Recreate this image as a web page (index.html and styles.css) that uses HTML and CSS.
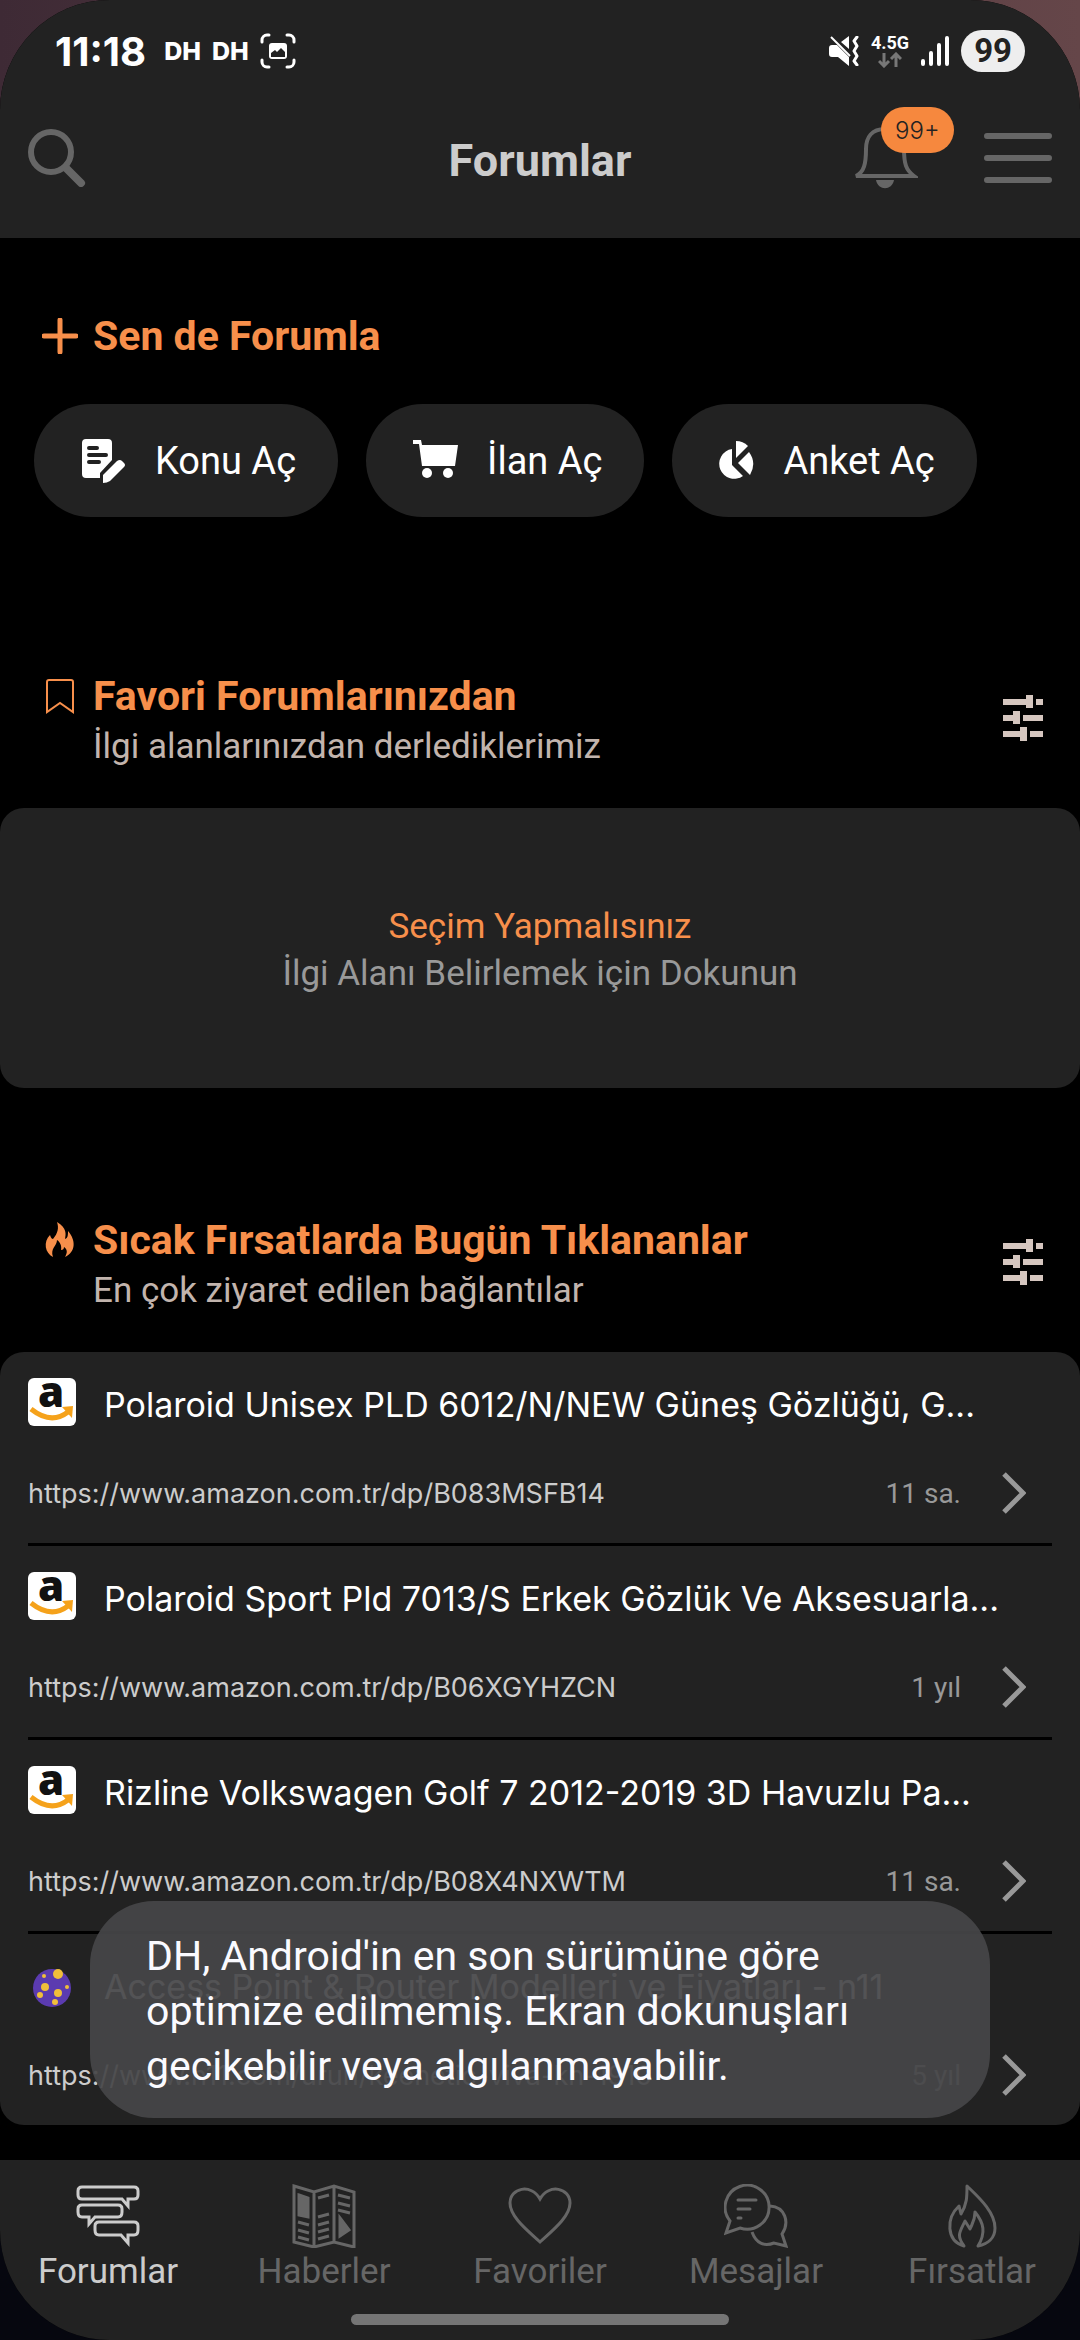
FILE: index.html
```html
<!DOCTYPE html>
<html lang="tr">
<head>
  <meta charset="UTF-8">
  <meta name="viewport" content="width=device-width, initial-scale=1.0">
  <title>Forumlar</title>
  <link rel="stylesheet" href="styles.css">
</head>
<body>

<div class="screen">

  <header class="header">
    <!-- Status bar -->
    <div class="status-bar">
      <div class="status-left">
        <span class="clock">11:18</span>
        <span class="notif">DH</span>
        <span class="notif">DH</span>
        <svg class="shot-icon" viewBox="0 0 36 36">
          <path d="M2 9V7a5 5 0 0 1 5-5h2M27 2h2a5 5 0 0 1 5 5v2M34 27v2a5 5 0 0 1-5 5h-2M9 34H7a5 5 0 0 1-5-5v-2" fill="none" stroke="#fff" stroke-width="3" stroke-linecap="round"/>
          <rect x="9" y="10" width="18" height="16" rx="3" fill="#fff"/>
          <path d="M11 24v-4l4-3 2 2 4-4 4 4v5z" fill="#222"/>
        </svg>
      </div>
      <div class="status-right">
        <svg class="mute-icon" viewBox="0 0 30 30">
          <path d="M0 12q0-3 3-3h5l12 12v9L9 21H3q-3 0-3-3zM12 6l8-6v13z" fill="#fff"/>
          <path d="M2 1l19 19" stroke="#fff" stroke-width="2"/>
          <path d="M28 1l-3 4 3 5-3 5 3 5-3 5 3 4" fill="none" stroke="#fff" stroke-width="3" stroke-linecap="round" stroke-linejoin="round"/>
        </svg>
        <div class="network">
          <span>4.5G</span>
          <svg viewBox="0 0 24 16">
            <path d="M6 1v13M1 9l5 5 5-5M18 15V2M13 7l5-5 5 5" fill="none" stroke="#777" stroke-width="3"/>
          </svg>
        </div>
        <svg class="signal-icon" viewBox="0 0 28 30">
          <path d="M2 25v3M10 17v11M18 9v19M26 2v26" stroke="#fff" stroke-width="4" stroke-linecap="round"/>
        </svg>
        <span class="battery">99</span>
      </div>
    </div>

    <div class="toolbar">
      <button class="icon-button" aria-label="Ara">
        <svg class="search-icon" viewBox="0 0 58 58">
          <circle cx="23" cy="23" r="20" fill="none" stroke="#666" stroke-width="6"/>
          <path d="M38 39l15 15" stroke="#666" stroke-width="8" stroke-linecap="round"/>
        </svg>
      </button>
      <h1>Forumlar</h1>
      <div class="toolbar-right">
        <button class="icon-button bell" aria-label="Bildirimler">
          <svg class="bell-icon" viewBox="0 0 66 62">
            <path d="M33 2C20 2 14 10 14 22c0 15-2 23-10 27h58c-8-6-10-12-10-27C52 10 46 2 33 2z" fill="none" stroke="#666" stroke-width="4"/>
            <path d="M24 53h18c-2 11-16 11-18 0z" fill="#666"/>
          </svg>
          <span class="badge">99+</span>
        </button>
        <button class="icon-button" aria-label="Menü">
          <svg class="menu-icon" viewBox="0 0 68 50">
            <path d="M3 3h62M3 25h62M3 47h62" stroke="#666" stroke-width="6" stroke-linecap="round"/>
          </svg>
        </button>
      </div>
    </div>
  </header>

  <main class="content">
    <section>
      <div class="section-head">
        <svg class="head-icon" viewBox="0 0 36 36">
          <path d="M18 2v32M2 18h32" stroke="#f78f4b" stroke-width="5" stroke-linecap="round"/>
        </svg>
        <h2>Sen de Forumla</h2>
      </div>
      <div class="chips">
        <button class="chip">
          <svg class="chip-icon" viewBox="0 0 46 46">
            <path d="M6 1h22q4 0 4 4v17L20 35v5H6q-4 0-4-4V5q0-4 4-4z" fill="#fff"/>
            <path d="M9 10h8M9 17h17M9 24h10" stroke="#222" stroke-width="4" stroke-linecap="round"/>
            <path d="M23 45v-8l14-14q3-2 5 0l2 2q2 2 0 4L30 43q-3 2-7 2z" fill="#fff"/>
          </svg>
          Konu Aç
        </button>
        <button class="chip">
          <svg class="chip-icon" viewBox="0 0 46 46">
            <path d="M1 2h8l1 5h36l-3 21H10L7 6H1z" fill="#fff"/>
            <circle cx="15" cy="35" r="5" fill="#fff"/>
            <circle cx="36" cy="35" r="5" fill="#fff"/>
          </svg>
          İlan Aç
        </button>
        <button class="chip">
          <svg class="chip-icon poll-icon" viewBox="3 0 36 46">
            <path d="M17 11v16l11 11A15 15 0 1 1 17 11z" fill="#fff"/>
            <path d="M21 3q7 0 12 5L21 20z" fill="#fff"/>
            <path d="M23 25l11-11q8 11 1 23z" fill="#fff"/>
          </svg>
          Anket Aç
        </button>
      </div>
    </section>

    <section class="favorites">
      <div class="section-head">
        <svg class="head-icon" viewBox="0 0 36 36">
          <path d="M5 34V4q0-2 2-2h22q2 0 2 2v30L18 25z" fill="none" stroke="#f78f4b" stroke-width="2"/>
        </svg>
        <div class="head-text">
          <h2>Favori Forumlarınızdan</h2>
          <p>İlgi alanlarınızdan derlediklerimiz</p>
        </div>
        <button class="icon-button tune" aria-label="Favori ayarları">
          <svg class="tune-icon" viewBox="0 0 40 46">
            <path d="M0 4h23V0h7v13h-7v-3H0zM33 4h7v6h-7zM0 20h10v-4h7v13h-7v-3H0zM20 20h20v6H20zM0 36h17v-4h7v14h-7v-4H0zM27 36h13v6H27z" fill="#d5c6bf"/>
          </svg>
        </button>
      </div>
      <a class="card empty-card" href="#">
        <span class="empty-title">Seçim Yapmalısınız</span>
        <span>İlgi Alanı Belirlemek için Dokunun</span>
      </a>
    </section>

    <section class="deals">
      <div class="section-head">
        <svg class="head-icon" viewBox="0 0 36 36">
          <path d="M15 0c10 6 9 12 8 17 3-1 3-4 3-8 8 9 8 21-3 26 3-5 2-8-1-10 0 2-1 3-3 3 1-4-1-8-4-10 0 6-7 8-4 17C3 31 1 20 8 13c1 3 2 4 3 4 5-6 6-11 4-17z" fill="#f78f4b"/>
        </svg>
        <div class="head-text">
          <h2>Sıcak Fırsatlarda Bugün Tıklananlar</h2>
          <p>En çok ziyaret edilen bağlantılar</p>
        </div>
        <button class="icon-button tune" aria-label="Fırsat ayarları">
          <svg class="tune-icon" viewBox="0 0 40 46">
            <path d="M0 4h23V0h7v13h-7v-3H0zM33 4h7v6h-7zM0 20h10v-4h7v13h-7v-3H0zM20 20h20v6H20zM0 36h17v-4h7v14h-7v-4H0zM27 36h13v6H27z" fill="#d5c6bf"/>
          </svg>
        </button>
      </div>
      <ul class="card link-list">
        <li>
          <a class="link-row" href="#">
            <div class="link-title">
              <svg class="favicon" viewBox="0 0 48 48">
                <rect width="48" height="48" rx="6" fill="#fff"/>
                <text x="23" y="29" class="favicon-letter">a</text>
                <path d="M3 31q20 16 37 3" fill="none" stroke="#f5a21b" stroke-width="5"/>
                <path d="M34 29l11-1-1 12z" fill="#f5a21b"/>
              </svg>
              <span>Polaroid Unisex PLD 6012/N/NEW Güneş Gözlüğü, G...</span>
            </div>
            <div class="link-meta">
              <span class="url">https://www.amazon.com.tr/dp/B083MSFB14</span>
              <span class="time">11 sa.</span>
              <svg class="chevron" viewBox="0 0 24 42"><path d="M2 2l19 19L2 40" fill="none" stroke="#999" stroke-width="5"/></svg>
            </div>
          </a>
        </li>
        <li>
          <a class="link-row" href="#">
            <div class="link-title">
              <svg class="favicon" viewBox="0 0 48 48">
                <rect width="48" height="48" rx="6" fill="#fff"/>
                <text x="23" y="29" class="favicon-letter">a</text>
                <path d="M3 31q20 16 37 3" fill="none" stroke="#f5a21b" stroke-width="5"/>
                <path d="M34 29l11-1-1 12z" fill="#f5a21b"/>
              </svg>
              <span>Polaroid Sport Pld 7013/S Erkek Gözlük Ve Aksesuarla...</span>
            </div>
            <div class="link-meta">
              <span class="url">https://www.amazon.com.tr/dp/B06XGYHZCN</span>
              <span class="time">1 yıl</span>
              <svg class="chevron" viewBox="0 0 24 42"><path d="M2 2l19 19L2 40" fill="none" stroke="#999" stroke-width="5"/></svg>
            </div>
          </a>
        </li>
        <li>
          <a class="link-row" href="#">
            <div class="link-title">
              <svg class="favicon" viewBox="0 0 48 48">
                <rect width="48" height="48" rx="6" fill="#fff"/>
                <text x="23" y="29" class="favicon-letter">a</text>
                <path d="M3 31q20 16 37 3" fill="none" stroke="#f5a21b" stroke-width="5"/>
                <path d="M34 29l11-1-1 12z" fill="#f5a21b"/>
              </svg>
              <span>Rizline Volkswagen Golf 7 2012-2019 3D Havuzlu Pa...</span>
            </div>
            <div class="link-meta">
              <span class="url">https://www.amazon.com.tr/dp/B08X4NXWTM</span>
              <span class="time">11 sa.</span>
              <svg class="chevron" viewBox="0 0 24 42"><path d="M2 2l19 19L2 40" fill="none" stroke="#999" stroke-width="5"/></svg>
            </div>
          </a>
        </li>
        <li>
          <a class="link-row" href="#">
            <div class="link-title">
              <svg class="favicon" viewBox="0 0 48 48">
                <circle cx="24" cy="28" r="19" fill="#5b3bb0"/>
                <g fill="#f0bf3a">
                  <circle cx="30" cy="14" r="5"/>
                  <circle cx="17" cy="27" r="4"/>
                  <circle cx="30" cy="33" r="4"/>
                  <circle cx="16" cy="16" r="2"/>
                  <circle cx="39" cy="27" r="2"/>
                  <circle cx="12" cy="35" r="3"/>
                  <circle cx="27" cy="42" r="3"/>
                </g>
              </svg>
              <span>Access Point &amp; Router Modelleri ve Fiyatları - n11</span>
            </div>
            <div class="link-meta">
              <span class="url">https://www.n11.com/urun/keenetic-viva-kn-1910</span>
              <span class="time">5 yıl</span>
              <svg class="chevron" viewBox="0 0 24 42"><path d="M2 2l19 19L2 40" fill="none" stroke="#999" stroke-width="5"/></svg>
            </div>
          </a>
        </li>
      </ul>
    </section>
  </main>

  <nav class="bottom-nav">
    <div class="tabs">
      <a class="tab active" href="#">
        <svg viewBox="0 0 64 64">
          <path d="M6 3h52q4 0 4 4v4q0 4-4 4h-6v7l-6-7H6q-4 0-4-4V7q0-4 4-4z"/>
          <path d="M6 21h36q4 0 4 4v3q0 5-4 5H19l-6 7v-7H6q-4 0-4-5v-3q0-4 4-4z"/>
          <path d="M23 38h35q4 0 4 4v4q0 5-4 5h-6v8l-7-8H23q-4 0-4-5v-4q0-4 4-4z"/>
        </svg>
        Forumlar
      </a>
      <a class="tab" href="#">
        <svg viewBox="0 0 64 64">
          <path d="M2 2l20 6 20-6 20 6v55l-20-5-20 5-20-5zM22 8v55M42 2v56"/>
          <path d="M7 11l9 3v19l-9-2zM48 34l9 12-9 6z" fill="#666"/>
          <path d="M6 38l11 3M6 46l11 3M6 53l11 3M26 14l11-3M26 33l11-3M26 41l11-3M26 48l11-3M26 55l11-3M46 11l12 3M46 19l12 3M46 26l12 3"/>
        </svg>
        Haberler
      </a>
      <a class="tab" href="#">
        <svg viewBox="0 0 64 64">
          <path d="M32 58C20 47 2 33 2 19 2 4 23-1 32 15 41-1 62 4 62 19c0 14-18 28-30 39z"/>
        </svg>
        Favoriler
      </a>
      <a class="tab" href="#">
        <svg viewBox="0 0 64 64">
          <path d="M2 49l4-12A22 22 0 1 1 16 44z"/>
          <path d="M46 22c15 1 20 16 12 28l4 12-12-3c-10 4-18 0-22-11"/>
          <path d="M14 16h18M14 25h12M14 34h3" stroke-linecap="round"/>
        </svg>
        Mesajlar
      </a>
      <a class="tab" href="#">
        <svg viewBox="0 0 64 64">
          <path d="M24 62c-18-5-18-28-5-40l2 8c6-10 6-17 6-28 9 9 28 25 28 42 0 10-7 16-17 18 8-13 6-23-3-34 0 9-3 12-5 17l-5-8c-5 11-9 14-1 25z" stroke-linejoin="round"/>
        </svg>
        Fırsatlar
      </a>
    </div>
    <div class="home-indicator"></div>
  </nav>

  <div class="toast" role="status">DH, Android'in en son sürümüne göre optimize edilmemiş. Ekran dokunuşları gecikebilir veya algılanmayabilir.</div>
</div>

</body>
</html>
```
FILE: styles.css
```css
* {
  box-sizing: border-box;
}

body {
  margin: 0;
  font-family: Roboto, sans-serif;
  color: #ffffff;
  background: linear-gradient(to bottom, transparent 50%, #06070f 50%),
    linear-gradient(to right, #3e2a35, #654649);
}

h1, h2, p, ul {
  margin: 0;
  padding: 0;
}

a {
  color: inherit;
  text-decoration: none;
}

button {
  font-family: inherit;
  color: inherit;
  border: none;
  cursor: pointer;
}

svg {
  display: block;
  flex-shrink: 0;
}

.screen {
  position: relative;
  display: flex;
  flex-direction: column;
  min-height: 100vh;
  background-color: #000000;
  border-radius: 110px;
  overflow: hidden;
}

.header {
  background-color: #222222;
  padding-bottom: 24px;
}

/* Status bar */
.status-bar {
  display: flex;
  justify-content: space-between;
  align-items: center;
  height: 102px;
  padding: 0 55px;
}

.status-left,
.status-right {
  display: flex;
  align-items: center;
}

.clock {
  font-family: Inter, sans-serif;
  font-size: 40px;
  font-weight: 700;
  margin-right: 18px;
}

.notif {
  font-family: Inter, sans-serif;
  font-size: 25px;
  font-weight: 800;
  margin-right: 11px;
}

.shot-icon {
  width: 36px;
  height: 36px;
}

.status-right {
  gap: 12px;
}

.mute-icon {
  width: 30px;
  height: 30px;
}

.network {
  display: flex;
  flex-direction: column;
  align-items: center;
  font-size: 18px;
  font-weight: 700;
  line-height: 18px;
}

.network svg {
  width: 24px;
  height: 16px;
}

.signal-icon {
  width: 28px;
  height: 30px;
}

.battery {
  padding: 0 13px;
  border-radius: 21px;
  background-color: #eeeeee;
  color: #222222;
  font-size: 33px;
  font-weight: 700;
  line-height: 42px;
}

/* Toolbar */
.toolbar {
  display: grid;
  grid-template-columns: 1fr auto 1fr;
  align-items: center;
  height: 112px;
  padding: 0 28px;
}

.icon-button {
  justify-self: start;
  padding: 0;
  background: none;
}

.search-icon {
  width: 58px;
  height: 58px;
}

.toolbar h1 {
  padding-top: 4px;
  font-size: 45px;
  font-weight: 700;
  color: #cccccc;
}

.toolbar-right {
  display: flex;
  justify-content: flex-end;
  align-items: center;
  gap: 66px;
}

.bell {
  position: relative;
}

.bell-icon {
  width: 66px;
  height: 62px;
}

.badge {
  position: absolute;
  left: 29px;
  top: -20px;
  padding: 2px 14px 0;
  border-radius: 23px;
  background-color: #f6883e;
  color: #222222;
  font-family: Inter, sans-serif;
  font-size: 24px;
  font-weight: 300;
  line-height: 44px;
}

.menu-icon {
  width: 68px;
  height: 50px;
}

/* Sections */
.content {
  flex: 1;
  padding: 74px 0 35px;
}

.section-head {
  display: flex;
  padding: 0 37px 0 42px;
}

.head-icon {
  width: 36px;
  height: 36px;
  margin: 6px 15px 0 0;
}

.head-text {
  flex: 1;
}

.section-head h2 {
  font-size: 41px;
  font-weight: 700;
  line-height: 48px;
  color: #f78f4b;
}

.section-head p {
  font-size: 35px;
  line-height: 54px;
  color: #c2b4ad;
}

.tune {
  align-self: flex-start;
  margin-top: 23px;
}

.tune-icon {
  width: 40px;
  height: 46px;
}

.chips {
  display: flex;
  gap: 28px;
  padding: 44px 34px 0;
}

.chip {
  display: flex;
  align-items: center;
  gap: 29px;
  height: 113px;
  padding: 0 42px 0 46px;
  border-radius: 57px;
  background-color: #222222;
  font-size: 38px;
}

.chip-icon {
  width: 46px;
  height: 46px;
}

.poll-icon {
  width: 36px;
}

.favorites {
  margin-top: 155px;
}

.deals {
  margin-top: 128px;
}

.card {
  margin-top: 34px;
  border-radius: 24px;
  background-color: #222222;
}

.empty-card {
  display: flex;
  flex-direction: column;
  align-items: center;
  justify-content: center;
  height: 280px;
  padding-top: 4px;
  font-size: 35px;
  line-height: 47px;
  color: #999999;
}

.empty-title {
  color: #f78f4b;
}

/* Link list */
.link-list {
  list-style: none;
  padding: 0 28px;
}

.link-list li + li {
  border-top: 3px solid #000000;
}

.link-row {
  display: block;
  padding: 26px 0;
}

.link-title {
  display: flex;
  gap: 28px;
  margin-bottom: 37px;
  font-family: Inter, sans-serif;
  font-size: 34px;
  line-height: 54px;
  white-space: nowrap;
}

.favicon {
  width: 48px;
  height: 48px;
  overflow: visible;
}

.favicon-letter {
  font-family: "Open Sans", sans-serif;
  font-size: 42px;
  font-weight: 800;
  text-anchor: middle;
  fill: #111111;
}

.link-meta {
  display: flex;
  align-items: center;
  height: 48px;
  padding-right: 26px;
}

.url {
  flex: 1;
  font-family: Inter, sans-serif;
  font-size: 27px;
  color: #cccccc;
}

.time {
  font-size: 28px;
  color: #999999;
}

.chevron {
  width: 24px;
  height: 42px;
  margin-left: 41px;
}

/* Bottom navigation */
.bottom-nav {
  padding: 24px 0 15px;
  background-color: #222222;
}

.tabs {
  display: grid;
  grid-template-columns: repeat(5, 1fr);
}

.tab {
  display: flex;
  flex-direction: column;
  align-items: center;
  font-size: 35px;
  line-height: 48px;
  color: #666666;
}

.tab svg {
  width: 64px;
  height: 64px;
  fill: none;
  stroke: currentColor;
  stroke-width: 3px;
}

.tab.active {
  color: #cccccc;
}

.home-indicator {
  width: 35%;
  height: 11px;
  margin: 18px auto 0;
  border-radius: 6px;
  background-color: #757575;
}

.toast {
  position: absolute;
  left: 90px;
  right: 90px;
  bottom: 222px;
  padding: 28px 56px 24px;
  border-radius: 64px;
  background-color: rgba(70, 70, 72, 0.93);
  color: #fafaff;
  font-size: 41px;
  line-height: 55px;
}
```
